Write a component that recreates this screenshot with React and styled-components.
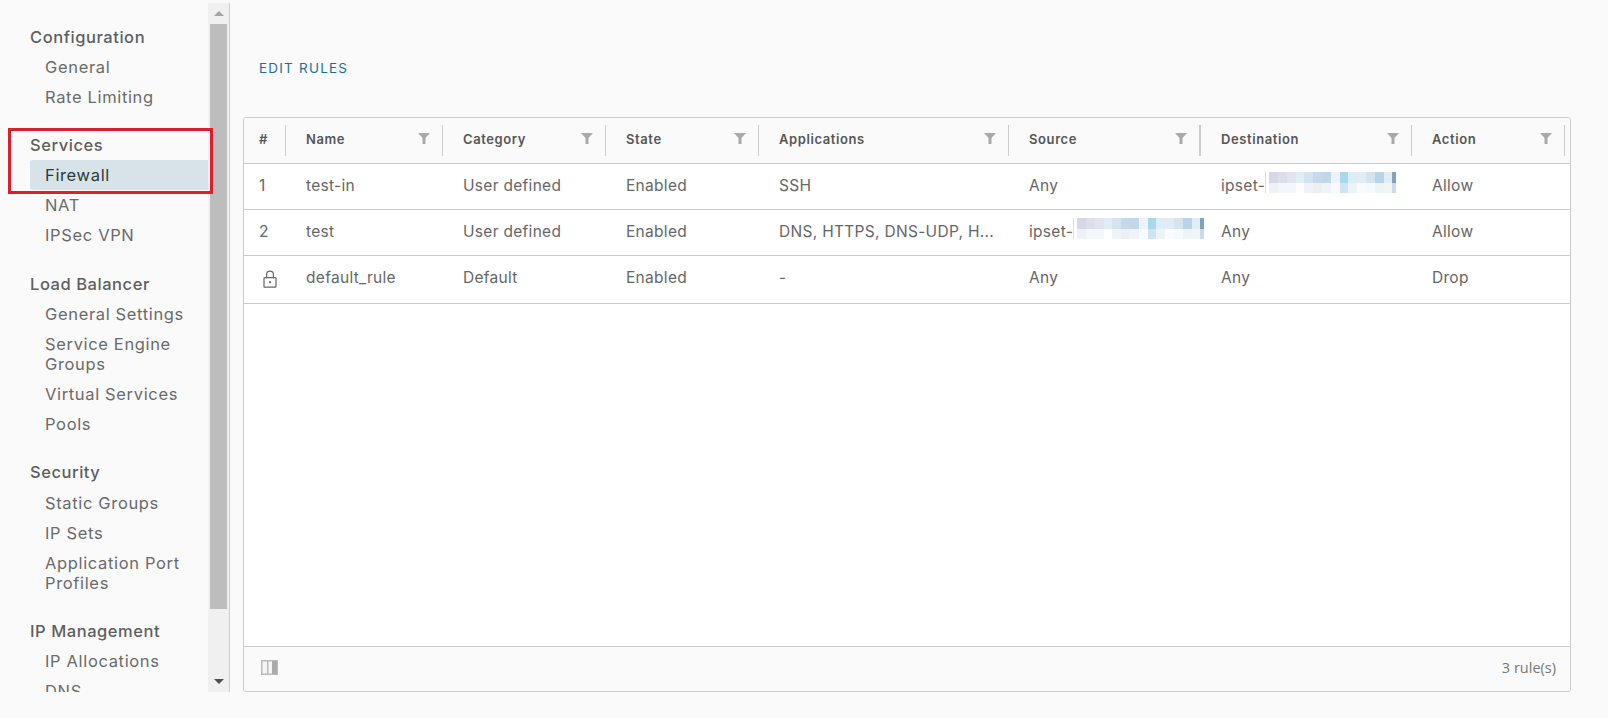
import React from "react";
import styled, { createGlobalStyle } from "styled-components";

const COLUMNS = ["#", "Name", "Category", "State", "Applications", "Source", "Destination", "Action"];
const GRID = "42px 157px 163px 153px 250px 192px 211px 153px 1fr";

const NAV = [
  { title: "Configuration", items: ["General", "Rate Limiting"] },
  { title: "Services", items: ["Firewall", "NAT", "IPSec VPN"] },
  { title: "Load Balancer", items: ["General Settings", "Service Engine Groups", "Virtual Services", "Pools"] },
  { title: "Security", items: ["Static Groups", "IP Sets", "Application Port Profiles"] },
  { title: "IP Management", items: ["IP Allocations", "DNS"] },
];

const MOSAIC = [
  ["#d5d8e6", "#dcdfea", "#dfe4ee", "#e1edf5", "#d5e3ee", "#c5d9ea", "#c2d8ea", "#eef3f8", "#abd7ec", "#dcedf5", "#e2ecf3", "#d6e4f0", "#b9d4e8", "#e3ecf3", "#7fa3bf"],
  ["#eef2f8", "#f3f6fa", "#f3f6fb", "#ffffff", "#eff2f6", "#ecf0f5", "#f0f3f7", "#f8fafc", "#cfe4f2", "#eef3f6", "#f8fcfe", "#f5fafc", "#eef3f6", "#f0f5f8", "#c9dbe6"],
];

const GlobalStyle = createGlobalStyle`
  html, body {
    margin: 0;
    background: #fafafa;
  }
  body {
    font-family: "Inter", "Open Sans", sans-serif;
    color: #666;
  }
`;

const Page = styled.div`
  display: flex;
  height: 718px;
  box-sizing: border-box;
  padding: 3px 37px 26px 0;
  position: relative;
  overflow: hidden;
`;

const Sidebar = styled.aside`
  display: flex;
  flex: 0 0 230px;
  height: 100%;
  border-right: 1px solid #ccc;
  box-sizing: border-box;
`;

const NavList = styled.nav`
  flex: 0 0 178px;
  padding: 23.5px 0 0 30px;
  overflow: hidden;
`;

const NavGroup = styled.div`
  margin-bottom: 23.1px;
`;

const NavTitle = styled.div`
  font-size: 16.5px;
  font-weight: 500;
  letter-spacing: 0.55px;
  line-height: 20px;
  color: #5e5e5e;
  margin-bottom: 5px;
`;

const NavItem = styled.div`
  font-size: 16.5px;
  letter-spacing: 0.65px;
  line-height: 20px;
  padding: 5.1px 10px 5.1px 15px;
  color: ${(p) => (p.$active ? "#2b3a35" : "#6a6a6a")};
  background: ${(p) => (p.$active ? "#d8e3e9" : "transparent")};
  border-radius: 3px 0 0 3px;
`;

const ScrollTrack = styled.div`
  flex: 0 0 21px;
  display: flex;
  flex-direction: column;
  align-items: center;
  background: #f0f0f0;
`;

const ScrollArrow = styled.div`
  flex: 0 0 21px;
  display: flex;
  align-items: center;
  justify-content: center;
  &::before {
    content: "";
    border-left: 5px solid transparent;
    border-right: 5px solid transparent;
    border-${(p) => (p.$down ? "top" : "bottom")}: 5px solid ${(p) => (p.$down ? "#505050" : "#a3a3a3")};
  }
`;

const ScrollThumb = styled.div`
  flex: 0 0 585px;
  width: 17px;
  background: #bdbdbd;
`;

const ScrollRest = styled.div`
  flex: 1;
`;

const Highlight = styled.div`
  position: absolute;
  left: 8px;
  top: 128px;
  width: 205px;
  height: 66px;
  box-sizing: border-box;
  border: 3px solid #d9202c;
  pointer-events: none;
`;

const Main = styled.main`
  flex: 1;
  display: flex;
  flex-direction: column;
  padding-left: 13px;
  min-width: 0;
`;

const Toolbar = styled.div`
  flex: 0 0 114px;
  display: flex;
  align-items: center;
  padding: 16px 0 0 16px;
  box-sizing: border-box;
`;

const EditButton = styled.button`
  border: 0;
  background: none;
  padding: 0;
  font-family: inherit;
  font-size: 13.5px;
  letter-spacing: 1.2px;
  color: #1f6f94;
  text-transform: uppercase;
`;

const Table = styled.section`
  flex: 1;
  display: flex;
  flex-direction: column;
  border: 1px solid #ccc;
  border-radius: 3px;
  background: #fff;
  min-height: 0;
`;

const HeaderRow = styled.div`
  display: grid;
  grid-template-columns: ${GRID};
  align-items: center;
  flex: 0 0 45px;
  background: #fafafa;
  border-bottom: 1px solid #ccc;
  border-radius: 3px 3px 0 0;
`;

const HeaderCell = styled.div`
  display: flex;
  align-items: center;
  justify-content: space-between;
  height: 31px;
  box-sizing: border-box;
  padding: 0 12px 4px ${(p) => (p.$first ? "15px" : "20px")};
  border-right: ${(p) => (p.$thick ? "2px" : "1px")} solid #ccc;
  font-size: 13px;
  font-weight: 600;
  letter-spacing: 0.6px;
  color: #565656;
`;

const BodyRow = styled.div`
  display: grid;
  grid-template-columns: ${GRID};
  align-items: start;
  flex: 0 0 ${(p) => p.$height}px;
  border-bottom: 1px solid #ccc;
`;

const BodyCell = styled.div`
  display: flex;
  align-items: center;
  height: 42px;
  padding-left: ${(p) => (p.$first ? "15px" : "20px")};
  font-size: 15.5px;
  letter-spacing: 0.3px;
  color: #666;
  white-space: nowrap;
`;

const LockSlot = styled.span`
  display: flex;
  margin: 4px 0 0 4px;
`;

const Spacer = styled.div`
  flex: 1;
`;

const Footer = styled.footer`
  flex: 0 0 45px;
  display: flex;
  align-items: center;
  justify-content: space-between;
  padding: 0 14px 4px 17px;
  box-sizing: border-box;
  background: #fafafa;
  border-top: 1px solid #ccc;
  border-radius: 0 0 3px 3px;
`;

const RuleCount = styled.span`
  font-family: "Open Sans", sans-serif;
  font-size: 14.5px;
  color: #777;
`;

const Redacted = styled.span`
  display: grid;
  grid-template-columns: repeat(14, 8.8px) 4px;
  grid-auto-rows: 10.5px;
  margin-top: -5px;
  padding-left: 3px;
  border-left: 1px solid #ddd;
`;

const Pixel = styled.i`
  display: block;
  background: ${(p) => p.$color};
`;

const FilterIcon = () => (
  <svg width="12" height="11" viewBox="0 0 12 11">
    <path d="M0 0h12L7.5 5v6h-3V5z" fill="#a9a9a9" />
  </svg>
);

const LockIcon = () => (
  <svg width="14" height="18" viewBox="0 0 14 18" fill="none" stroke="#666" strokeWidth="1.2">
    <rect x="1" y="7.6" width="12" height="9.6" rx="0.8" />
    <path d="M3.6 7.6V4a3.4 3.4 0 0 1 6.8 0v3.6" transform="translate(0 0.6)" />
    <circle cx="7" cy="12.2" r="1.1" fill="#666" stroke="none" />
  </svg>
);

const ColumnsIcon = () => (
  <svg width="17" height="15" viewBox="0 0 17 15">
    <rect x="0.75" y="0.75" width="15.5" height="13.5" fill="#f4f4f4" stroke="#bbb" strokeWidth="1.5" />
    <rect x="6" y="1" width="1.5" height="13" fill="#bbb" />
    <rect x="11" y="1" width="5" height="13" fill="#aaa" />
  </svg>
);

const IpSet = () => (
  <>
    ipset-
    <Redacted>
      {MOSAIC.flat().map((color, i) => (
        <Pixel key={i} $color={color} />
      ))}
    </Redacted>
  </>
);

const ROWS = [
  { height: 45, cells: ["1", "test-in", "User defined", "Enabled", "SSH", "Any", <IpSet />, "Allow"] },
  { height: 45, cells: ["2", "test", "User defined", "Enabled", "DNS, HTTPS, DNS-UDP, H...", <IpSet />, "Any", "Allow"] },
  { height: 47, cells: [<LockSlot><LockIcon /></LockSlot>, "default_rule", "Default", "Enabled", "-", "Any", "Any", "Drop"] },
];

export default function App() {
  return (
    <>
      <GlobalStyle />
      <Page>
        <Sidebar>
          <NavList>
            {NAV.map((group) => (
              <NavGroup key={group.title}>
                <NavTitle>{group.title}</NavTitle>
                {group.items.map((item) => (
                  <NavItem key={item} $active={item === "Firewall"}>
                    {item}
                  </NavItem>
                ))}
              </NavGroup>
            ))}
          </NavList>
          <ScrollTrack>
            <ScrollArrow />
            <ScrollThumb />
            <ScrollRest />
            <ScrollArrow $down />
          </ScrollTrack>
        </Sidebar>
        <Highlight />
        <Main>
          <Toolbar>
            <EditButton>Edit Rules</EditButton>
          </Toolbar>
          <Table>
            <HeaderRow>
              {COLUMNS.map((col, i) => (
                <HeaderCell key={col} $first={i === 0} $thick={col === "Source"}>
                  {col}
                  {i > 0 && <FilterIcon />}
                </HeaderCell>
              ))}
            </HeaderRow>
            {ROWS.map((row, r) => (
              <BodyRow key={r} $height={row.height}>
                {row.cells.map((cell, i) => (
                  <BodyCell key={i} $first={i === 0}>
                    {cell}
                  </BodyCell>
                ))}
              </BodyRow>
            ))}
            <Spacer />
            <Footer>
              <ColumnsIcon />
              <RuleCount>3 rule(s)</RuleCount>
            </Footer>
          </Table>
        </Main>
      </Page>
    </>
  );
}
